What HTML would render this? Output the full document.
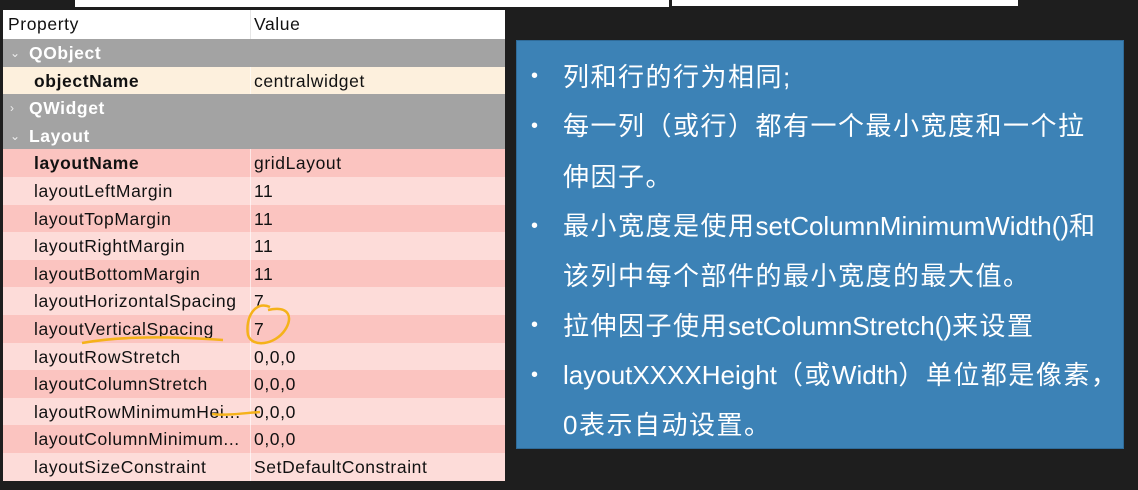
<!DOCTYPE html>
<html><head><meta charset="utf-8"><style>
*{margin:0;padding:0;box-sizing:border-box}
body{width:1138px;height:490px;background:#1e1e1e;position:relative;overflow:hidden;font-family:"Liberation Sans","Noto Sans CJK SC",sans-serif}
.top1{position:absolute;left:75px;top:0;width:594px;height:7px;background:#fff}
.top2{position:absolute;left:672px;top:0;width:346px;height:6px;background:#fff}
.tbl{position:absolute;left:3px;top:10px;width:502px;height:471px;background:#fff}
.row{position:absolute;left:0;width:502px;height:27.6px;font-size:17.5px;letter-spacing:0.6px;line-height:28px;color:#111;white-space:nowrap}
.row .p{position:absolute;left:31px}
.row .v{position:absolute;left:251px}
.row .sep{position:absolute;left:247px;top:0;bottom:0;width:1px;background:rgba(255,255,255,.6)}
.hdr{background:#fff}
.hdr .p{left:5px}
.grp{background:#a3a3a3;color:#fff;font-weight:bold}
.grp .p{left:26px}
.grp .a{position:absolute;left:7px;font-size:12px;color:#eee;font-weight:normal}
.obj{background:#fdf0dd}
.d{background:#fbc4c0}
.l{background:#fddcd9}
b{font-weight:bold}
.box{position:absolute;left:516px;top:40px;width:608px;height:409px;background:#3c82b6;border:1px solid #2f6b99;color:#fff;font-size:26px;letter-spacing:1.5px}
.box .ln{position:absolute;left:46px;white-space:nowrap}
.box .bu{position:absolute;left:14px;font-size:20px}
.e{letter-spacing:0}
</style></head><body>
<div class="top1"></div><div class="top2"></div>
<div class="tbl">
<div class="row hdr" style="top:0;height:29px"><span class="p">Property</span><span class="v">Value</span><span class="sep" style="background:#e6e6e6"></span></div>
<div class="row grp" style="top:29px"><span class="a">⌄</span><span class="p">QObject</span></div>
<div class="row obj" style="top:56.6px"><span class="p"><b>objectName</b></span><span class="v">centralwidget</span><span class="sep"></span></div>
<div class="row grp" style="top:84.2px"><span class="a">›</span><span class="p">QWidget</span></div>
<div class="row grp" style="top:111.8px"><span class="a">⌄</span><span class="p">Layout</span></div>
<div class="row d" style="top:139.4px"><span class="p"><b>layoutName</b></span><span class="v">gridLayout</span><span class="sep"></span></div>
<div class="row l" style="top:167px"><span class="p">layoutLeftMargin</span><span class="v">11</span><span class="sep"></span></div>
<div class="row d" style="top:194.6px"><span class="p">layoutTopMargin</span><span class="v">11</span><span class="sep"></span></div>
<div class="row l" style="top:222.2px"><span class="p">layoutRightMargin</span><span class="v">11</span><span class="sep"></span></div>
<div class="row d" style="top:249.8px"><span class="p">layoutBottomMargin</span><span class="v">11</span><span class="sep"></span></div>
<div class="row l" style="top:277.4px"><span class="p">layoutHorizontalSpacing</span><span class="v">7</span><span class="sep"></span></div>
<div class="row d" style="top:305px"><span class="p">layoutVerticalSpacing</span><span class="v">7</span><span class="sep"></span></div>
<div class="row l" style="top:332.6px"><span class="p">layoutRowStretch</span><span class="v">0,0,0</span><span class="sep"></span></div>
<div class="row d" style="top:360.2px"><span class="p">layoutColumnStretch</span><span class="v">0,0,0</span><span class="sep"></span></div>
<div class="row l" style="top:387.8px"><span class="p">layoutRowMinimumHei...</span><span class="v">0,0,0</span><span class="sep"></span></div>
<div class="row d" style="top:415.4px"><span class="p">layoutColumnMinimum...</span><span class="v">0,0,0</span><span class="sep"></span></div>
<div class="row l" style="top:443px"><span class="p">layoutSizeConstraint</span><span class="v">SetDefaultConstraint</span><span class="sep"></span></div>
</div>
<svg style="position:absolute;left:0;top:0" width="510" height="490">
<path d="M270 307 C255 300 245 318 248 335 C252 348 275 345 285 330 C293 318 290 305 268 310" stroke="#f5b21a" stroke-width="2.5" fill="none"/>
<path d="M82 343 C110 338 150 335 223 340" stroke="#f5b21a" stroke-width="2.5" fill="none"/>
<path d="M212 414 C225 416 245 413 260 412" stroke="#f5b21a" stroke-width="2.5" fill="none"/>
</svg>
<div class="box">
<span class="bu" style="top:24px">•</span><span class="ln" style="top:16px">列和行的行为相同;</span>
<span class="bu" style="top:74px">•</span><span class="ln" style="top:65px">每一列（或行）都有一个最小宽度和一个拉</span>
<span class="ln" style="top:116px">伸因子。</span>
<span class="bu" style="top:174px">•</span><span class="ln" style="top:165px">最小宽度是使用<span class="e">setColumnMinimumWidth()</span>和</span>
<span class="ln" style="top:215px">该列中每个部件的最小宽度的最大值。</span>
<span class="bu" style="top:273px">•</span><span class="ln" style="top:265px">拉伸因子使用<span class="e">setColumnStretch()</span>来设置</span>
<span class="bu" style="top:323px">•</span><span class="ln" style="top:314px"><span class="e">layoutXXXXHeight</span>（或<span class="e">Width</span>）单位都是像素，</span>
<span class="ln" style="top:364px">0表示自动设置。</span>
</div>
</body></html>
